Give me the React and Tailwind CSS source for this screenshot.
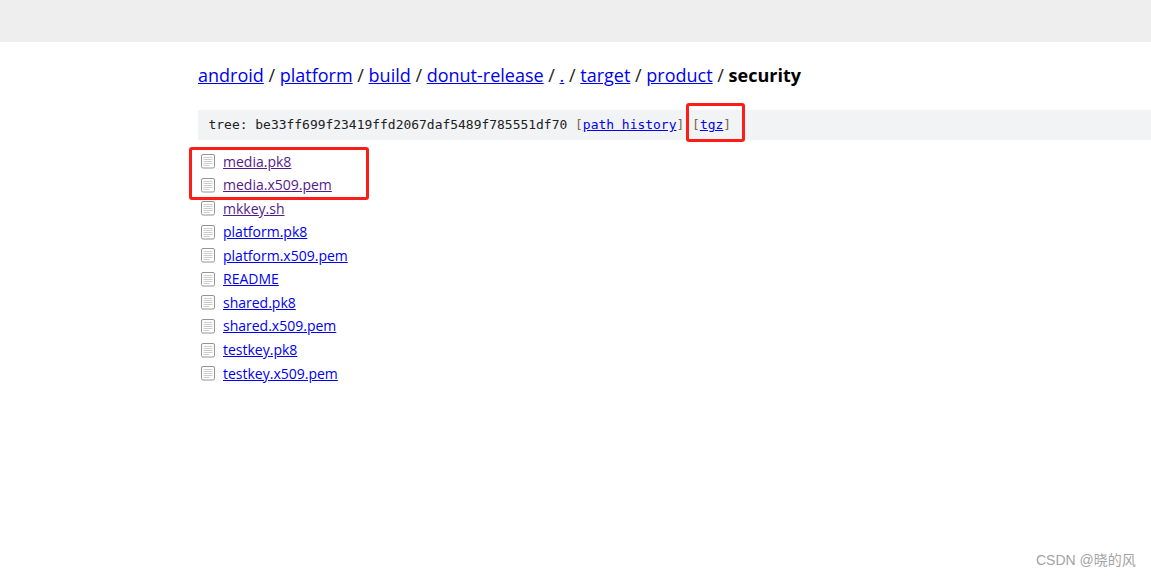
const crumbs = ['android', 'platform', 'build', 'donut-release', '.', 'target', 'product'];

const files = [
  { name: 'media.pk8', visited: true },
  { name: 'media.x509.pem', visited: true },
  { name: 'mkkey.sh', visited: true },
  { name: 'platform.pk8' },
  { name: 'platform.x509.pem' },
  { name: 'README' },
  { name: 'shared.pk8' },
  { name: 'shared.x509.pem' },
  { name: 'testkey.pk8' },
  { name: 'testkey.x509.pem' },
];

const FileIcon = () => (
  <svg width="16" height="16" viewBox="0 0 16 16" className="shrink-0">
    <rect x="1.5" y="1.5" width="13" height="13.5" rx="1.5" fill="#ffffff" stroke="#949494" />
    <path d="M3.5 4.5h9M3.5 6.5h9M3.5 8.5h9M3.5 10.5h9M3.5 12.5h6" stroke="#cccccc" fill="none" />
  </svg>
);

export default function App() {
  return (
    <div className="relative w-[1151px] h-[576px] overflow-hidden bg-white font-['Open_Sans',sans-serif] text-black">
      <div className="h-[42px] bg-[#eeeeee]" />

      <div className="pl-[198px]">
        <h1 className="mt-[19px] h-[28px] text-[18px] leading-[28px] font-normal whitespace-pre text-[#202124]">
          {crumbs.map((c) => (
            <span key={c}>
              <a href="#" className="text-[#0000ee] underline">{c}</a>
              {' / '}
            </span>
          ))}
          <span className="font-bold text-black">security</span>
        </h1>

        <div className="mt-[21px] h-[30px] pl-[10.5px] bg-[#f1f3f4] font-['DejaVu_Sans_Mono',monospace] text-[12.96px] leading-[30px] whitespace-pre text-[#202124]">
          tree: be33ff699f23419ffd2067daf5489f785551df70 <span className="text-[#7a6a50]">[</span><a href="#" className="text-[#0000ee] underline">path history</a><span className="text-[#7a6a50]">]</span> <span className="text-[#7a6a50]">[</span><a href="#" className="text-[#0000ee] underline">tgz</a><span className="text-[#7a6a50]">]</span>
        </div>

        <ul className="mt-[9.4px] pl-[2px]">
          {files.map((f) => (
            <li key={f.name} className="flex items-center gap-[7px] h-[23.55px] text-[14px]">
              <FileIcon />
              <a href="#" className={f.visited ? 'text-[#551a8b] underline' : 'text-[#0000ee] underline'}>{f.name}</a>
            </li>
          ))}
        </ul>
      </div>

      {/* red annotation boxes drawn on top of the screenshot */}
      <div className="absolute left-[686px] top-[103px] w-[59px] h-[39px] border-[3px] border-[#fb1d16] rounded-[3px]" />
      <div className="absolute left-[189px] top-[147px] w-[180px] h-[53px] border-[3px] border-[#fb1d16] rounded-[3px]" />

      <div className="absolute left-[1036px] top-[551px] text-[14px] leading-[18px] text-[#a3a3a3] font-['Liberation_Sans','Noto_Sans_CJK_SC',sans-serif]">
        CSDN @晓的风
      </div>
    </div>
  );
}
